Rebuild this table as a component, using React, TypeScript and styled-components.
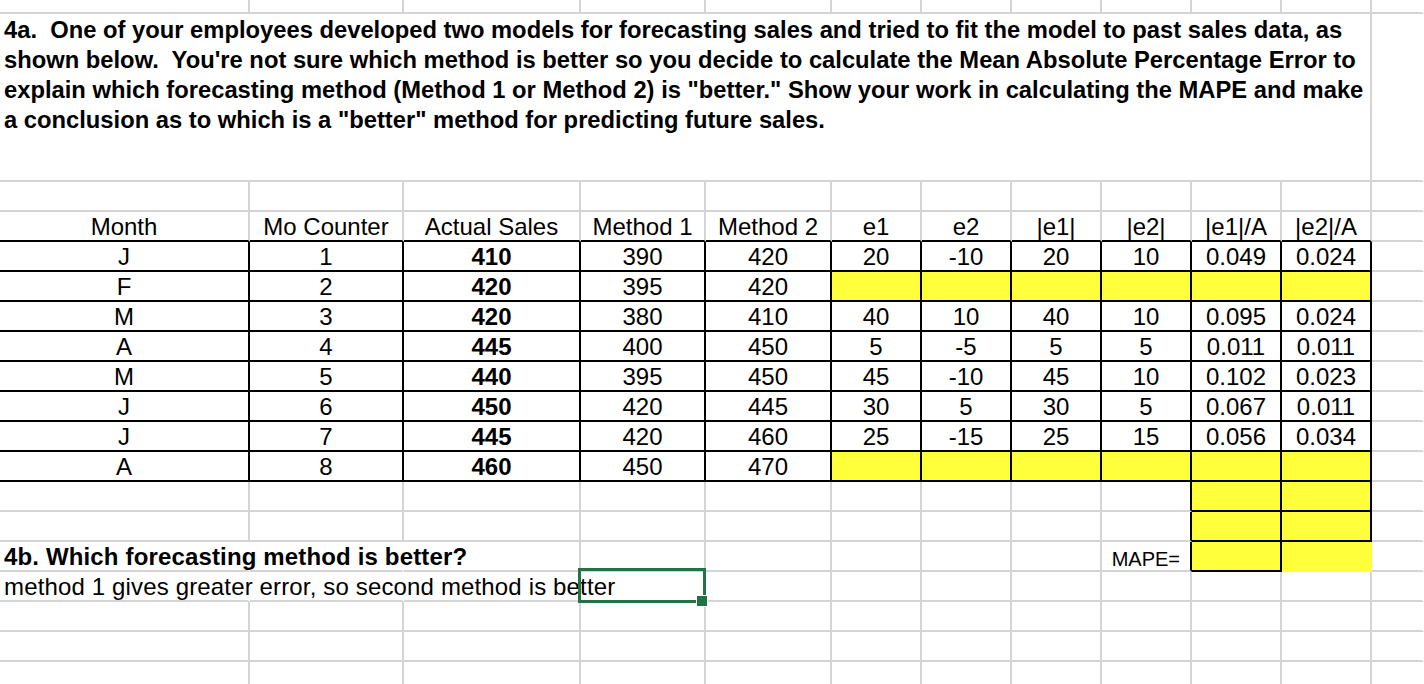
import React from "react";
import styled, { createGlobalStyle } from "styled-components";

const GRID = "#d4d4d4";
const INK = "#000";
const YELLOW = "#ffff3c";
const EXCEL_GREEN = "#217346";

// column widths incl. the 2px right gridline
const widths = [250, 154, 177, 125, 126, 90, 90, 90, 90, 90, 90];

type Edge = "grid" | "ink" | "none" | "fill";

const edgeColor = (e: Edge = "grid") =>
  e === "ink" ? INK : e === "fill" ? YELLOW : e === "none" ? "transparent" : GRID;

const GlobalStyle = createGlobalStyle`
  html, body {
    margin: 0;
    padding: 0;
    background: #fff;
    overflow: hidden;
  }
  body {
    font-family: "Liberation Sans", Arial, sans-serif;
    color: #000;
  }
`;

const Sheet = styled.div`
  width: 1424px;
  height: 684px;
  overflow: hidden;
  display: flex;
  flex-direction: column;
`;

const Row = styled.div<{ $h?: number }>`
  display: flex;
  flex: none;
  height: ${(p) => p.$h ?? 30}px;
`;

const Cell = styled.div<{
  $w?: number;
  $r?: Edge;
  $b?: Edge;
  $fill?: boolean;
  $bold?: boolean;
  $align?: "left" | "center" | "right";
}>`
  box-sizing: border-box;
  flex: ${(p) => (p.$w ? `0 0 ${p.$w}px` : "1 1 auto")};
  min-width: 0;
  height: 100%;
  border-right: 2px solid ${(p) => edgeColor(p.$r)};
  border-bottom: 2px solid ${(p) => edgeColor(p.$b)};
  background: ${(p) => (p.$fill ? YELLOW : "transparent")};
  font-size: 24px;
  font-weight: ${(p) => (p.$bold ? 700 : 400)};
  line-height: 28px;
  padding-top: 1px;
  text-align: ${(p) => p.$align ?? "center"};
  white-space: pre;
`;

const Prompt = styled(Cell)`
  font-size: 23.75px;
  line-height: 30px;
  padding: 1px 0 0 4px;
  text-align: left;
`;

const Overflow = styled(Cell)`
  padding-left: 4px;
  text-align: left;
  letter-spacing: 0.15px;
`;

const Label = styled(Cell)`
  font-size: 20px;
  padding: 3px 10px 0 0;
  text-align: right;
`;

const Selected = styled(Cell)`
  position: relative;
`;

const SelectionBox = styled.div`
  position: absolute;
  left: -3px;
  top: -4px;
  width: 128px;
  height: 35px;
  box-sizing: border-box;
  border: 3px solid ${EXCEL_GREEN};
`;

const FillHandle = styled.span`
  position: absolute;
  left: 116px;
  top: 24px;
  width: 10px;
  height: 10px;
  background: ${EXCEL_GREEN};
  box-shadow: 0 0 0 1px #fff;
`;

type Spec = {
  text?: React.ReactNode;
  r?: Edge;
  b?: Edge;
  fill?: boolean;
  bold?: boolean;
};

const Line = ({ cells = [], h }: { cells?: Spec[]; h?: number }) => (
  <Row $h={h}>
    {widths.map((w, i) => {
      const c = cells[i] ?? {};
      return (
        <Cell key={i} $w={w} $r={c.r} $b={c.b} $fill={c.fill} $bold={c.bold}>
          {c.text}
        </Cell>
      );
    })}
    <Cell $r="none" />
  </Row>
);

const headers = [
  "Month",
  "Mo Counter",
  "Actual Sales",
  "Method 1",
  "Method 2",
  "e1",
  "e2",
  "|e1|",
  "|e2|",
  "|e1|/A",
  "|e2|/A",
];

type Rec = [string, number, number, number, number, string[] | null];

const records: Rec[] = [
  ["J", 1, 410, 390, 420, ["20", "-10", "20", "10", "0.049", "0.024"]],
  ["F", 2, 420, 395, 420, null],
  ["M", 3, 420, 380, 410, ["40", "10", "40", "10", "0.095", "0.024"]],
  ["A", 4, 445, 400, 450, ["5", "-5", "5", "5", "0.011", "0.011"]],
  ["M", 5, 440, 395, 450, ["45", "-10", "45", "10", "0.102", "0.023"]],
  ["J", 6, 450, 420, 445, ["30", "5", "30", "5", "0.067", "0.011"]],
  ["J", 7, 445, 420, 460, ["25", "-15", "25", "15", "0.056", "0.034"]],
  ["A", 8, 460, 450, 470, null],
];

const boxed = (s: Spec = {}): Spec => ({ r: "ink", b: "ink", ...s });

const recordCells = ([m, n, actual, m1, m2, errs]: Rec): Spec[] => [
  boxed({ text: m }),
  boxed({ text: String(n) }),
  boxed({ text: String(actual), bold: true }),
  boxed({ text: String(m1) }),
  boxed({ text: String(m2) }),
  ...(errs ? errs.map((t) => boxed({ text: t })) : Array.from({ length: 6 }, () => boxed({ fill: true }))),
];

const tailCells: Spec[] = [{}, {}, {}, {}, {}, {}, {}, {}, { r: "ink" }, boxed({ fill: true }), boxed({ fill: true })];

export default function App() {
  return (
    <>
      <GlobalStyle />
      <Sheet>
        <Line h={14} />
        <Row $h={168}>
          <Prompt $w={1372} $bold>
            {"4a.  One of your employees developed two models for forecasting sales and tried to fit the model to past sales data, as"}
            <br />
            {"shown below.  You're not sure which method is better so you decide to calculate the Mean Absolute Percentage Error to"}
            <br />
            {'explain which forecasting method (Method 1 or Method 2) is "better." Show your work in calculating the MAPE and make'}
            <br />
            {'a conclusion as to which is a "better" method for predicting future sales.'}
          </Prompt>
          <Cell $r="none" />
        </Row>
        <Line />
        <Line cells={headers.map((text) => ({ text, b: "ink" }))} />
        {records.map((rec, i) => (
          <Line key={i} cells={recordCells(rec)} />
        ))}
        <Line cells={tailCells} />
        <Line cells={tailCells} />

        <Row>
          <Overflow $w={widths[0]} $r="none" $bold>
            {"4b. Which forecasting method is better?"}
          </Overflow>
          <Cell $w={widths[1]} $r="none" />
          <Cell $w={widths[2]} />
          <Cell $w={widths[3]} />
          <Cell $w={widths[4]} />
          <Cell $w={widths[5]} />
          <Cell $w={widths[6]} />
          <Cell $w={widths[7]} />
          <Label $w={widths[8]} $r="ink">
            MAPE=
          </Label>
          <Cell $w={widths[9]} $r="ink" $b="ink" $fill />
          <Cell $w={widths[10]} $r="fill" $b="fill" $fill />
          <Cell $r="none" />
        </Row>

        <Row>
          <Overflow $w={widths[0]} $r="none">
            method 1 gives greater error, so second method is better
          </Overflow>
          <Cell $w={widths[1]} $r="none" />
          <Cell $w={widths[2]} $r="none" />
          <Selected $w={widths[3]}>
            <SelectionBox />
            <FillHandle />
          </Selected>
          {widths.slice(4).map((w, i) => (
            <Cell key={i} $w={w} />
          ))}
          <Cell $r="none" />
        </Row>

        <Line />
        <Line />
        <Line />
      </Sheet>
    </>
  );
}
